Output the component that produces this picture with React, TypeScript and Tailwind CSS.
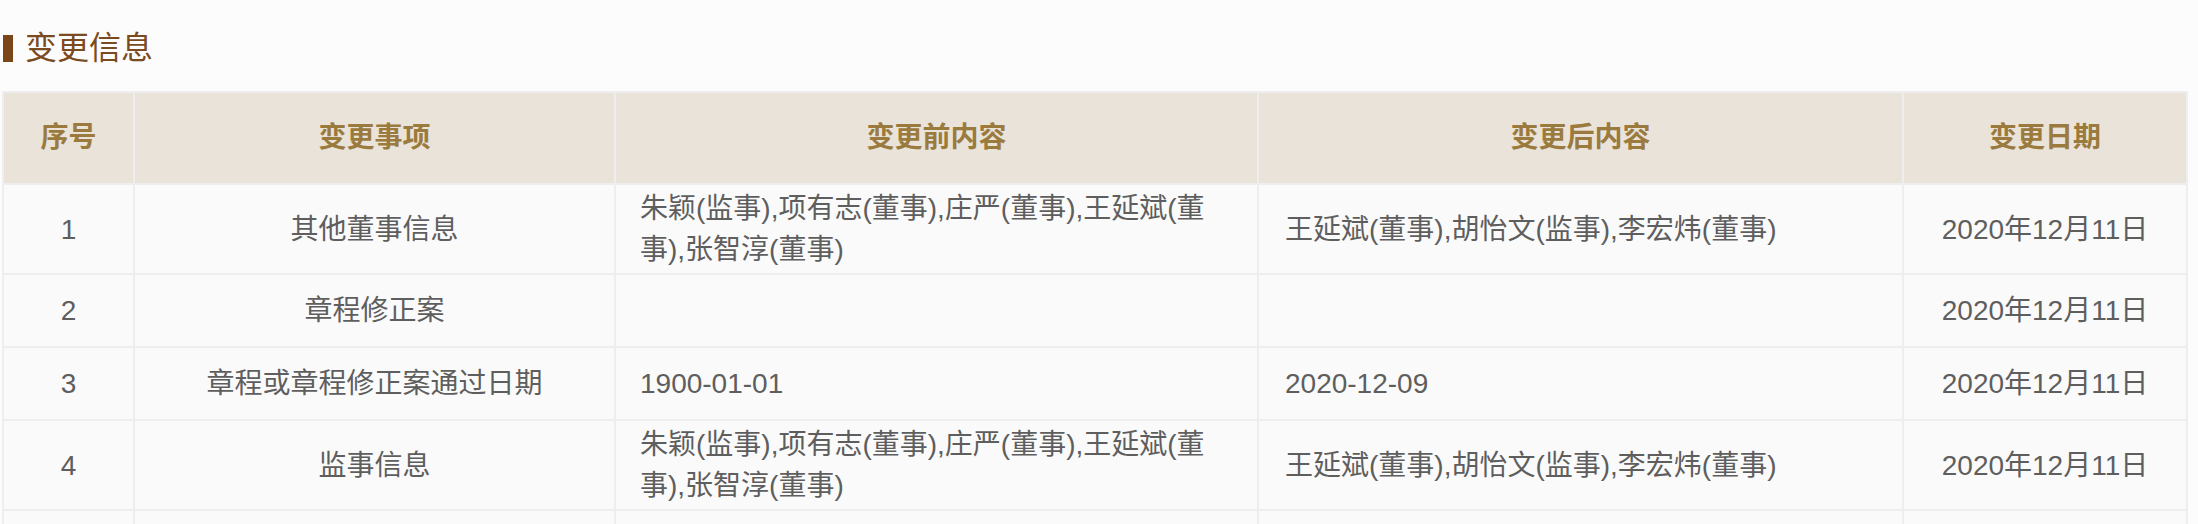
import React from 'react';

interface ChangeRow {
  no: number | '';
  item: string;
  before: string;
  after: string;
  date: string;
}

const rows: ChangeRow[] = [
  {
    no: 1,
    item: '其他董事信息',
    before: '朱颖(监事),项有志(董事),庄严(董事),王延斌(董事),张智淳(董事)',
    after: '王延斌(董事),胡怡文(监事),李宏炜(董事)',
    date: '2020年12月11日',
  },
  { no: 2, item: '章程修正案', before: '', after: '', date: '2020年12月11日' },
  { no: 3, item: '章程或章程修正案通过日期', before: '1900-01-01', after: '2020-12-09', date: '2020年12月11日' },
  {
    no: 4,
    item: '监事信息',
    before: '朱颖(监事),项有志(董事),庄严(董事),王延斌(董事),张智淳(董事)',
    after: '王延斌(董事),胡怡文(监事),李宏炜(董事)',
    date: '2020年12月11日',
  },
  // next row only starts inside the visible area
  { no: '', item: '', before: '', after: '', date: '' },
];

const headers = ['序号', '变更事项', '变更前内容', '变更后内容', '变更日期'];

export default function App() {
  return (
    <div className="min-h-screen bg-[#fcfcfc] pl-[2px] pr-[10px] pt-[28px] font-['Liberation_Sans','Noto_Sans_CJK_SC',sans-serif]">
      {/* Section title */}
      <div className="flex h-[40px] items-center">
        <span className="ml-px h-[27px] w-[10px] bg-[#7a4518]" />
        <h2 className="ml-[12px] text-[32px] leading-none font-normal text-[#7b4a1e]">变更信息</h2>
      </div>

      {/* Change table */}
      <table className="mt-[23px] w-full table-fixed border-collapse border-2 border-[#eeeeee] text-[28px] text-[#5e5e5e]">
        <colgroup>
          <col className="w-[131px]" />
          <col className="w-[481px]" />
          <col className="w-[643px]" />
          <col className="w-[645px]" />
          <col />
        </colgroup>
        <thead>
          <tr className="bg-[#e9e3da]">
            {headers.map((h) => (
              <th
                key={h}
                className="h-[92px] border-2 border-[#eeeeee] text-center font-bold text-[#9b7a3d]"
              >
                {h}
              </th>
            ))}
          </tr>
        </thead>
        <tbody>
          {rows.map((r, i) => (
            <tr key={i} className="bg-[#fafafa] leading-[41px]">
              <td className="h-[73px] border-2 border-[#eeeeee] py-[3px] text-center">{r.no}</td>
              <td className="border-2 border-[#eeeeee] py-[3px] text-center">{r.item}</td>
              <td className="border-2 border-[#eeeeee] px-[24px] py-[3px] text-left">{r.before}</td>
              <td className="border-2 border-[#eeeeee] px-[26px] py-[3px] text-left">{r.after}</td>
              <td className="border-2 border-[#eeeeee] py-[3px] text-center">{r.date}</td>
            </tr>
          ))}
        </tbody>
      </table>
    </div>
  );
}
